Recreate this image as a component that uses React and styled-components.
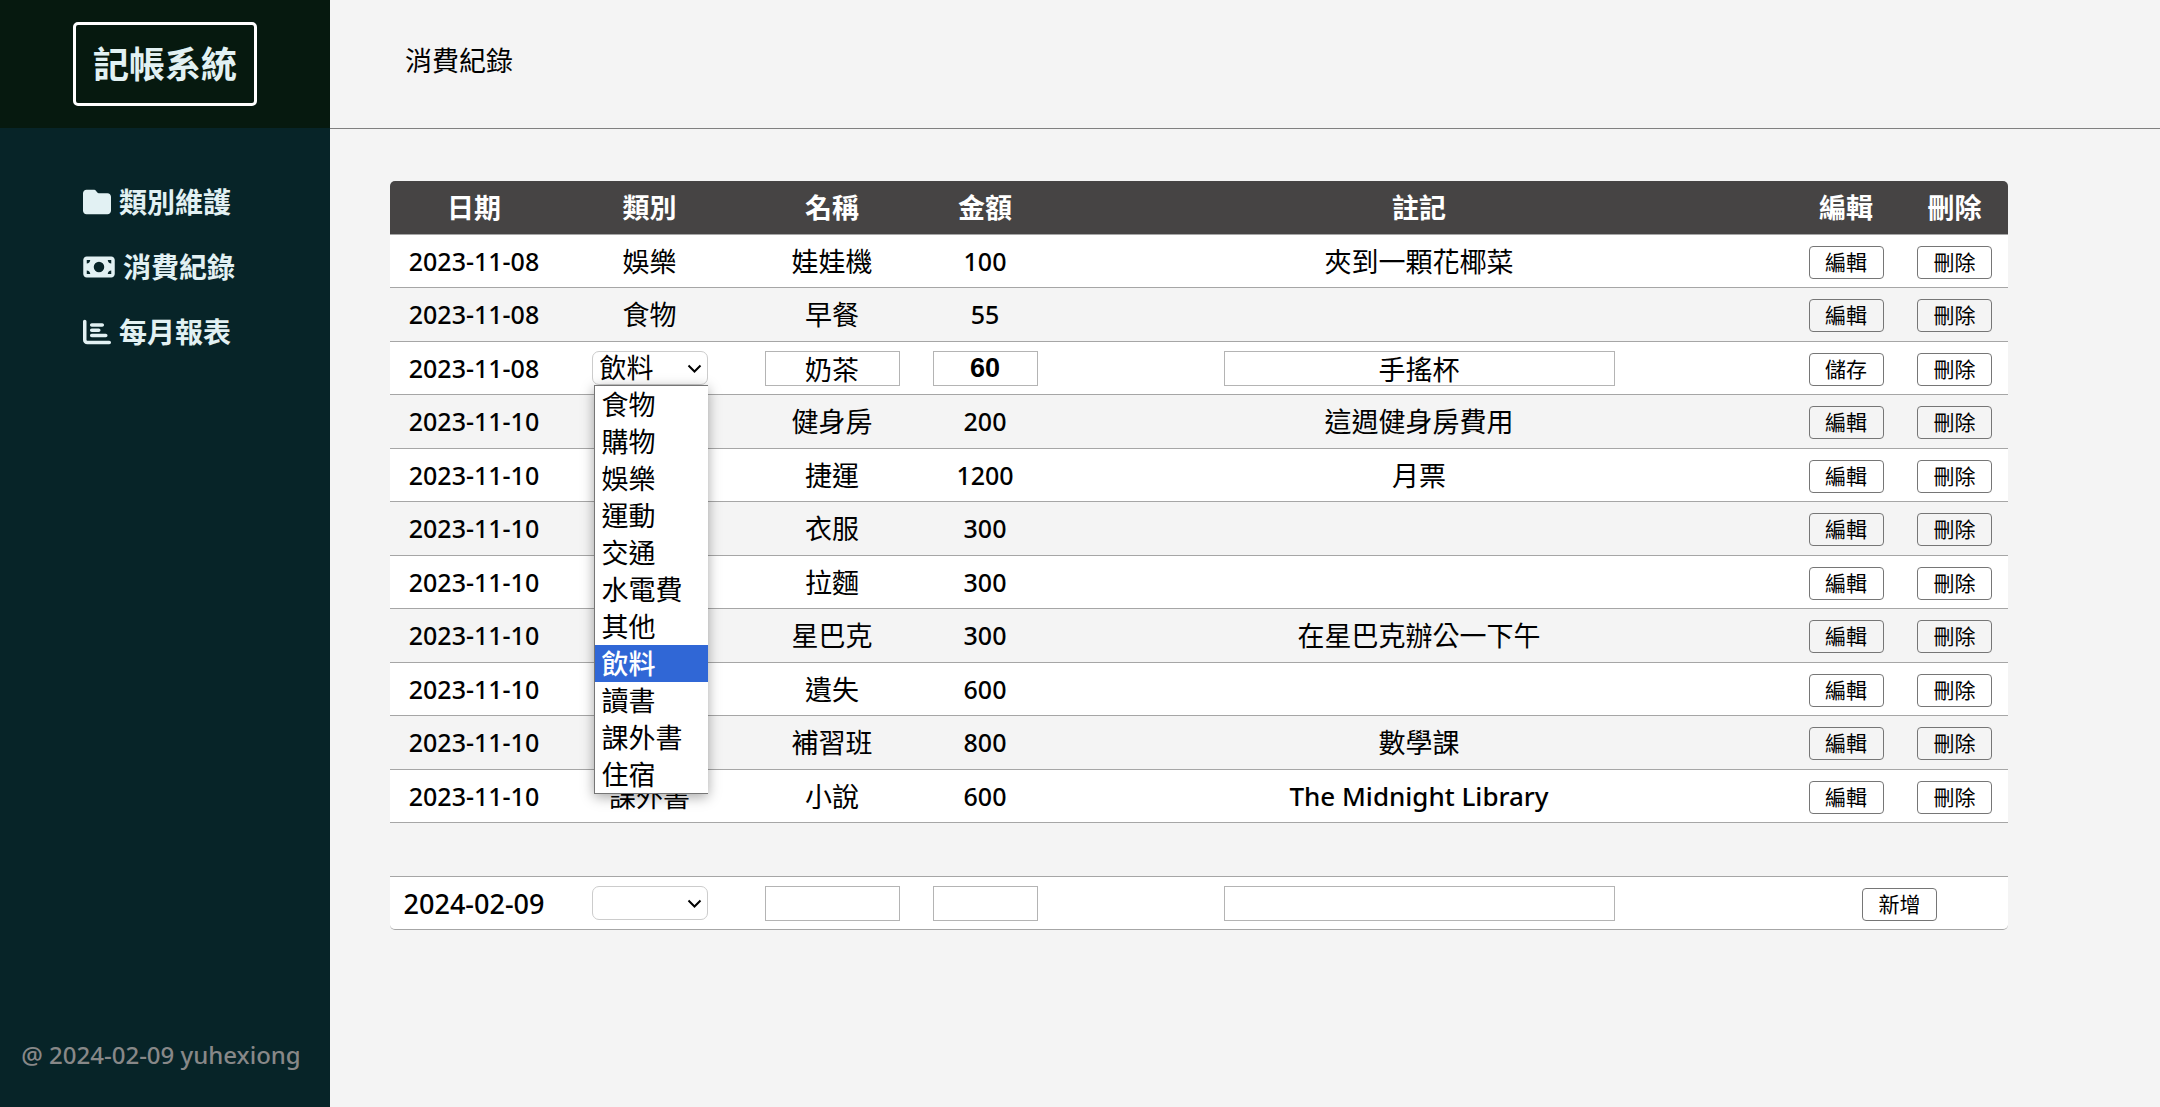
import React from "react";
import styled, { createGlobalStyle, css } from "styled-components";
import { FaFolder, FaMoneyBill, FaChartBar } from "react-icons/fa6";

const GlobalStyle = createGlobalStyle`
  *, *::before, *::after { box-sizing: border-box; }
  body {
    margin: 0;
    background: #f4f4f4;
    color: #000;
    font-family: "Noto Sans", "Noto Sans CJK TC", sans-serif;
    font-size: 27px;
    font-weight: 400;
    line-height: 37px;
  }
`;

const Layout = styled.div`
  display: grid;
  grid-template-columns: 330px 1fr;
  grid-template-rows: 129px 1fr;
  min-height: 100vh;
`;

const SideTop = styled.div`
  background: #072428;
`;

const Brand = styled.div`
  display: flex;
  align-items: center;
  justify-content: center;
  height: 128px;
  background: #06190f;
`;

const BrandTitle = styled.h1`
  margin: 0;
  padding: 17px 17px 15px;
  border: 3px solid #fff;
  border-radius: 5px;
  color: #e2f1f3;
  font-size: 36px;
  font-weight: 700;
  line-height: 46px;
`;

const Sidebar = styled.aside`
  display: flex;
  flex-direction: column;
  justify-content: space-between;
  padding: 53px 28px 34px 20px;
  background: #072428;
`;

const Nav = styled.nav`
  display: flex;
  flex-direction: column;
  gap: 25px;
  padding-left: 63px;
`;

const NavLink = styled.a`
  display: flex;
  align-items: center;
  gap: 8px;
  color: #e2f1f3;
  font-size: 28px;
  font-weight: 700;
  line-height: 40px;
  text-decoration: none;

  svg {
    flex: none;
    width: ${(p) => p.$iconWidth}px;
    height: 28px;
  }
`;

const Copyright = styled.footer`
  display: flex;
  justify-content: center;
  color: #888;
  font-size: 24px;
  font-weight: 500;
  white-space: nowrap;
`;

const Header = styled.header`
  padding: 42px 75px;
  border-bottom: 1px solid #808080;
`;

const PageTitle = styled.h2`
  margin: 0;
  font-size: 27px;
  font-weight: 400;
  line-height: 37px;
`;

const Main = styled.main`
  padding: 52px 152px 52px 60px;
`;

const Table = styled.table`
  width: 100%;
  table-layout: fixed;
  border-spacing: 0;
  text-align: center;
`;

const Col = styled.col`
  width: ${(p) => (p.$width ? `${p.$width}px` : "auto")};
`;

const Row = styled.tr`
  height: 53px;
  background: #fff;

  &:nth-child(even) {
    height: 54px;
    background: transparent;
  }
`;

const HeadRow = styled.tr`
  height: 54px;
`;

const HeadCell = styled.th`
  padding: 0;
  border-bottom: 1px solid #a6a6a6;
  background: #464444;
  color: #fff;
  font-weight: 700;

  &:first-child { border-top-left-radius: 5px; }
  &:last-child { border-top-right-radius: 5px; }
`;

const Cell = styled.td`
  padding: 0;
  border-bottom: 1px solid #a6a6a6;

  ${(p) =>
    p.$last &&
    css`
      &:first-child { border-bottom-left-radius: 5px; }
      &:last-child { border-bottom-right-radius: 5px; }
    `}
`;

const NumberCell = styled(Cell)`
  font-size: ${(p) => (p.$last ? 27 : 25)}px;
  font-weight: 500;
`;

const LatinText = styled.span`
  font-size: 26px;
  font-weight: 500;
`;

const fieldBox = css`
  display: block;
  height: 35px;
  margin: 0 auto;
  padding: 0 2px;
  border: 1px solid #b4b4b4;
  background: #fff;
  color: #000;
  font: inherit;
  line-height: 33px;
  text-align: center;
`;

const TextField = styled.input`
  ${fieldBox}
  width: ${(p) => p.$width}px;
`;

const AmountField = styled.input`
  ${fieldBox}
  width: 105px;
  font-family: "Liberation Sans", sans-serif;
  font-size: 27px;
  font-weight: 700;
`;

const Picker = styled.div`
  position: relative;
  width: 116px;
  margin: 0 auto;
`;

const Select = styled.select`
  appearance: none;
  display: block;
  width: 100%;
  height: 34px;
  padding: 0 24px 0 7px;
  border: 1px solid #ccc;
  border-radius: 7px;
  background: transparent;
  color: #000;
  font: inherit;
  line-height: 32px;
`;

const Chevron = styled.svg`
  position: absolute;
  top: 12px;
  right: 6px;
  width: 15px;
  height: 11px;
  pointer-events: none;
`;

const OptionList = styled.ul`
  position: absolute;
  z-index: 1;
  top: 100%;
  left: 2px;
  right: 0;
  margin: 0;
  padding: 0;
  border: 1px solid #767676;
  border-right: 0;
  background: #fff;
  box-shadow: 0 3px 12px rgba(0, 0, 0, 0.35);
  list-style: none;
  text-align: left;
`;

const OptionItem = styled.li`
  padding-left: 7px;
  background: ${(p) => (p["aria-selected"] ? "#3067d6" : "#fff")};
  color: ${(p) => (p["aria-selected"] ? "#fff" : "#000")};
  font-weight: ${(p) => (p["aria-selected"] ? 500 : 400)};
  line-height: 37px;
`;

const Button = styled.button`
  display: block;
  width: 75px;
  height: 33px;
  margin: 2px auto 0;
  padding: 0;
  border: 1px solid #767676;
  border-radius: 4px;
  background: transparent;
  color: #000;
  font: inherit;
  font-size: 21px;
  line-height: 31px;
`;

const categories = ["食物", "購物", "娛樂", "運動", "交通", "水電費", "其他", "飲料", "讀書", "課外書", "住宿"];

const records = [
  { date: "2023-11-08", category: "娛樂", name: "娃娃機", amount: 100, note: "夾到一顆花椰菜" },
  { date: "2023-11-08", category: "食物", name: "早餐", amount: 55, note: "" },
  { date: "2023-11-08", category: "飲料", name: "奶茶", amount: 60, note: "手搖杯", editing: true },
  { date: "2023-11-10", name: "健身房", amount: 200, note: "這週健身房費用" },
  { date: "2023-11-10", name: "捷運", amount: 1200, note: "月票" },
  { date: "2023-11-10", name: "衣服", amount: 300, note: "" },
  { date: "2023-11-10", name: "拉麵", amount: 300, note: "" },
  { date: "2023-11-10", name: "星巴克", amount: 300, note: "在星巴克辦公一下午" },
  { date: "2023-11-10", name: "遺失", amount: 600, note: "" },
  { date: "2023-11-10", name: "補習班", amount: 800, note: "數學課" },
  { date: "2023-11-10", category: "課外書", name: "小說", amount: 600, note: "The Midnight Library" },
];

const navItems = [
  { label: "類別維護", Icon: FaFolder, width: 28 },
  { label: "消費紀錄", Icon: FaMoneyBill, width: 32 },
  { label: "每月報表", Icon: FaChartBar, width: 28 },
];

const isLatin = (text) => /^[\x20-\x7e]+$/.test(text);

function CategoryPicker({ value, open }) {
  return (
    <Picker>
      <Select aria-label="類別" defaultValue={value}>
        <option value="" />
        {categories.map((c) => (
          <option key={c}>{c}</option>
        ))}
      </Select>
      <Chevron viewBox="0 0 15 11" fill="none" stroke="#000" strokeWidth="2" aria-hidden="true">
        <path d="M1.5 2.5 7.5 8.5 13.5 2.5" />
      </Chevron>
      {open && (
        <OptionList role="listbox" aria-label="類別">
          {categories.map((c) => (
            <OptionItem key={c} role="option" aria-selected={c === value}>
              {c}
            </OptionItem>
          ))}
        </OptionList>
      )}
    </Picker>
  );
}

function RecordRow({ record }) {
  const { date, category, name, amount, note, editing } = record;
  return (
    <Row>
      <NumberCell>{date}</NumberCell>
      <Cell>{editing ? <CategoryPicker value={category} open /> : category}</Cell>
      <Cell>{editing ? <TextField $width={135} aria-label="名稱" defaultValue={name} /> : name}</Cell>
      <NumberCell>{editing ? <AmountField aria-label="金額" defaultValue={amount} /> : amount}</NumberCell>
      <Cell>
        {editing ? (
          <TextField $width={391} aria-label="註記" defaultValue={note} />
        ) : isLatin(note) ? (
          <LatinText>{note}</LatinText>
        ) : (
          note
        )}
      </Cell>
      <Cell><Button type="button">{editing ? "儲存" : "編輯"}</Button></Cell>
      <Cell><Button type="button">刪除</Button></Cell>
    </Row>
  );
}

export default function App() {
  return (
    <>
      <GlobalStyle />
      <Layout>
        <SideTop>
          <Brand>
            <BrandTitle>記帳系統</BrandTitle>
          </Brand>
        </SideTop>
        <Header>
          <PageTitle>消費紀錄</PageTitle>
        </Header>
        <Sidebar>
          <Nav>
            {navItems.map(({ label, Icon, width }) => (
              <NavLink key={label} href="#" $iconWidth={width}>
                <Icon aria-hidden="true" />
                {label}
              </NavLink>
            ))}
          </Nav>
          <Copyright>@ 2024-02-09 yuhexiong</Copyright>
        </Sidebar>
        <Main>
          <Table>
            <colgroup>
              <Col $width={168} />
              <Col $width={183} />
              <Col $width={182} />
              <Col $width={124} />
              <Col />
              <Col $width={110} />
              <Col $width={107} />
            </colgroup>
            <thead>
              <HeadRow>
                {["日期", "類別", "名稱", "金額", "註記", "編輯", "刪除"].map((h) => (
                  <HeadCell key={h} scope="col">{h}</HeadCell>
                ))}
              </HeadRow>
            </thead>
            <tbody>
              {records.map((r, i) => (
                <RecordRow key={i} record={r} />
              ))}
              <Row>
                <Cell colSpan={7} />
              </Row>
              <Row>
                <NumberCell $last>2024-02-09</NumberCell>
                <Cell><CategoryPicker value="" /></Cell>
                <Cell><TextField $width={135} aria-label="名稱" /></Cell>
                <Cell><AmountField aria-label="金額" /></Cell>
                <Cell><TextField $width={391} aria-label="註記" /></Cell>
                <Cell $last colSpan={2}><Button type="button">新增</Button></Cell>
              </Row>
            </tbody>
          </Table>
        </Main>
      </Layout>
    </>
  );
}
